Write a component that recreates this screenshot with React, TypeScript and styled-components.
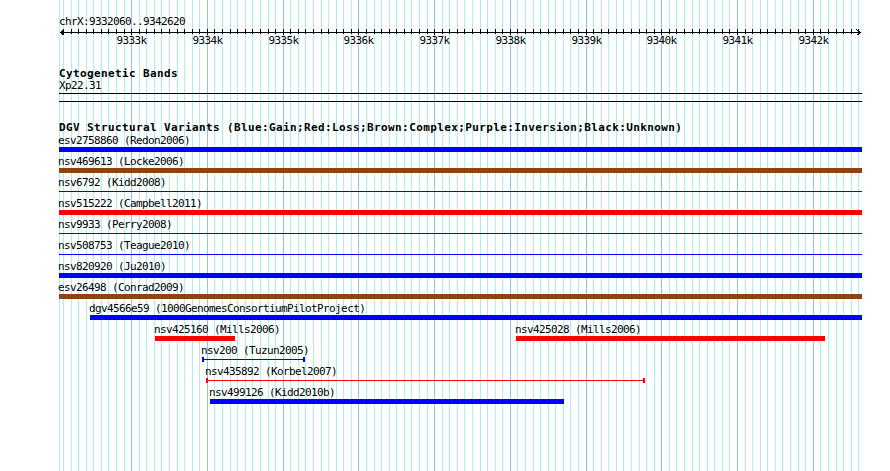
import React from 'react'
import styled, { createGlobalStyle, css } from 'styled-components'

// region shown: chrX:9332060..9342620
const START = 9332060
const ORIGIN = 60.5
const SCALE = 0.075733
const TRACK_LEFT = 59
const TRACK_WIDTH = 803
const PAGE_H = 471

const BLUE = '#0000ff'
const RED = '#ff0000'
const BROWN = '#8b4513'

const toPx = (bp: number) => Math.floor(ORIGIN + (bp - START) * SCALE)

type Kind = 'bar' | 'line' | 'capped'

interface Variant {
  id: string
  study: string
  x1: number
  x2: number
  color: string
  kind: Kind
}

const FULL = { x1: 59, x2: 862 }

const lanes: Variant[][] = [
  [{ id: 'esv2758860', study: 'Redon2006', ...FULL, color: BLUE, kind: 'bar' }],
  [{ id: 'nsv469613', study: 'Locke2006', ...FULL, color: BROWN, kind: 'bar' }],
  [{ id: 'nsv6792', study: 'Kidd2008', ...FULL, color: BLUE, kind: 'line' }],
  [{ id: 'nsv515222', study: 'Campbell2011', ...FULL, color: RED, kind: 'bar' }],
  [{ id: 'nsv9933', study: 'Perry2008', ...FULL, color: BLUE, kind: 'line' }],
  [{ id: 'nsv508753', study: 'Teague2010', ...FULL, color: BLUE, kind: 'line' }],
  [{ id: 'nsv820920', study: 'Ju2010', ...FULL, color: BLUE, kind: 'bar' }],
  [{ id: 'esv26498', study: 'Conrad2009', ...FULL, color: BROWN, kind: 'bar' }],
  [{ id: 'dgv4566e59', study: '1000GenomesConsortiumPilotProject', x1: 90, x2: 862, color: BLUE, kind: 'bar' }],
  [
    { id: 'nsv425160', study: 'Mills2006', x1: 155, x2: 235, color: RED, kind: 'bar' },
    { id: 'nsv425028', study: 'Mills2006', x1: 516, x2: 825, color: RED, kind: 'bar' },
  ],
  [{ id: 'nsv200', study: 'Tuzun2005', x1: 202, x2: 305, color: BLUE, kind: 'capped' }],
  [{ id: 'nsv435892', study: 'Korbel2007', x1: 206, x2: 645, color: RED, kind: 'capped' }],
  [{ id: 'nsv499126', study: 'Kidd2010b', x1: 210, x2: 564, color: BLUE, kind: 'bar' }],
]

const minorTicks: number[] = []
for (let bp = 9332100; bp <= 9342600; bp += 100) minorTicks.push(bp)
const majorTicks = minorTicks.filter((bp) => bp % 1000 === 0)

const GlobalStyle = createGlobalStyle`
  html, body {
    margin: 0;
    padding: 0;
    background: #fff;
    overflow: hidden;
  }
`

const smallFont = css`
  font-family: 'DejaVu Sans Mono', 'Liberation Mono', monospace;
  font-size: 11px;
  letter-spacing: -0.62px;
  line-height: 11px;
  color: #000;
  white-space: nowrap;
`

const boldFont = css`
  font-family: 'DejaVu Sans Mono', 'Liberation Mono', monospace;
  font-size: 11px;
  font-weight: bold;
  letter-spacing: 0.38px;
  line-height: 11px;
  color: #000;
  white-space: nowrap;
`

const Page = styled.div`
  width: 890px;
  height: ${PAGE_H}px;
  display: grid;
  overflow: hidden;

  & > * {
    grid-area: 1 / 1;
  }
`

const GridSvg = styled.svg`
  display: block;
`

const Content = styled.div`
  width: ${TRACK_WIDTH}px;
  padding: 16px 0 0 ${TRACK_LEFT}px;
  display: flex;
  flex-direction: column;
`

const Location = styled.div`
  ${smallFont};
`

const RulerSvg = styled.svg`
  display: block;
`

const RulerLabels = styled.div`
  position: relative;
  height: 11px;
`

const RulerLabel = styled.span`
  ${smallFont};
  position: absolute;
  top: 0;
  transform: translateX(-50%);
`

const TrackTitle = styled.div<{ $gap: number }>`
  ${boldFont};
  margin-top: ${(p) => p.$gap}px;
`

const BandName = styled.div`
  ${smallFont};
  margin-top: 1px;
`

const Band = styled.div`
  margin-top: 2px;
  height: 7px;
  border-top: 1px solid #000;
  border-bottom: 1px solid #000;
`

const Lanes = styled.div`
  margin-top: 2px;
  display: flex;
  flex-direction: column;
`

const Lane = styled.div`
  position: relative;
  height: 21px;
`

const Feature = styled.div`
  position: absolute;
  top: 0;
`

const FeatureLabel = styled.div`
  ${smallFont};
  margin-left: -1px;
`

const Bar = styled.div<{ $color: string; $kind: Kind }>`
  box-sizing: border-box;
  margin-top: 1px;
  height: 5px;
  ${(p) =>
    p.$kind === 'bar'
      ? css`
          background: ${p.$color};
        `
      : css`
          background: linear-gradient(${p.$color}, ${p.$color}) 0 2px / 100% 1px no-repeat;
        `}
  ${(p) =>
    p.$kind === 'capped' &&
    css`
      border-left: 2px solid ${p.$color};
      border-right: 2px solid ${p.$color};
    `}
`

const Grid = () => (
  <GridSvg width={890} height={PAGE_H} shapeRendering="crispEdges">
    <rect x={TRACK_LEFT} y={0} width={1} height={PAGE_H} fill="#afeeee" />
    {minorTicks.map((bp) => (
      <rect
        key={bp}
        x={toPx(bp)}
        y={0}
        width={1}
        height={PAGE_H}
        fill={bp % 1000 === 0 ? '#8cc6ec' : '#afeeee'}
      />
    ))}
  </GridSvg>
)

const Ruler = () => (
  <>
    <RulerSvg width={TRACK_WIDTH} height={8} shapeRendering="crispEdges">
      <rect x={1} y={5} width={801} height={1} fill="#000" />
      {minorTicks.map((bp) => (
        <rect
          key={bp}
          x={toPx(bp) - TRACK_LEFT}
          y={2}
          width={1}
          height={bp % 1000 === 0 ? 6 : 5}
          fill="#000"
        />
      ))}
      <path d="M5.5 2.5 L1.5 5.5 L5.5 8.5" fill="none" stroke="#000" strokeWidth={1} />
      <path d="M797.5 2.5 L801.5 5.5 L797.5 8.5" fill="none" stroke="#000" strokeWidth={1} />
    </RulerSvg>
    <RulerLabels>
      {majorTicks.map((bp) => (
        <RulerLabel key={bp} style={{ left: toPx(bp) - TRACK_LEFT + 0.5 }}>
          {bp / 1000}k
        </RulerLabel>
      ))}
    </RulerLabels>
  </>
)

export default function App() {
  return (
    <>
      <GlobalStyle />
      <Page>
        <Grid />
        <Content>
          <Location>chrX:9332060..9342620</Location>
          <Ruler />

          <TrackTitle $gap={22}>Cytogenetic Bands</TrackTitle>
          <BandName>Xp22.31</BandName>
          <Band />

          <TrackTitle $gap={20}>
            DGV Structural Variants (Blue:Gain;Red:Loss;Brown:Complex;Purple:Inversion;Black:Unknown)
          </TrackTitle>
          <Lanes>
            {lanes.map((lane, i) => (
              <Lane key={i}>
                {lane.map((v) => (
                  <Feature key={v.id} style={{ left: v.x1 - TRACK_LEFT }}>
                    <FeatureLabel>
                      {v.id} ({v.study})
                    </FeatureLabel>
                    <Bar $color={v.color} $kind={v.kind} style={{ width: v.x2 - v.x1 }} />
                  </Feature>
                ))}
              </Lane>
            ))}
          </Lanes>
        </Content>
      </Page>
    </>
  )
}
